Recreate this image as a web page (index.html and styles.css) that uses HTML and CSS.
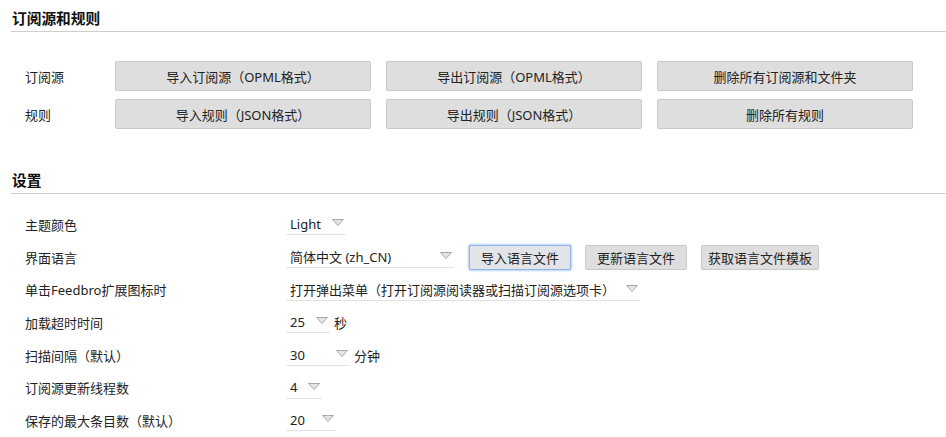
FILE: index.html
```html
<!DOCTYPE html>
<html lang="zh-CN">
<head>
<meta charset="utf-8">
<title>设置</title>
<link rel="stylesheet" href="styles.css">
</head>
<body>
<section class="sec">
  <h2 class="sec-title">订阅源和规则</h2>
  <div class="btn-grid">
    <div class="grid-label">订阅源</div>
    <button class="wide-btn">导入订阅源（OPML格式）</button>
    <button class="wide-btn">导出订阅源（OPML格式）</button>
    <button class="wide-btn">删除所有订阅源和文件夹</button>
    <div class="grid-label">规则</div>
    <button class="wide-btn">导入规则（JSON格式）</button>
    <button class="wide-btn">导出规则（JSON格式）</button>
    <button class="wide-btn">删除所有规则</button>
  </div>
</section>
<section class="sec sec-settings">
  <h2 class="sec-title">设置</h2>
  <div class="rows">
    <div class="row">
      <div class="row-label">主题颜色</div>
      <div class="sel sel-theme"><span>Light</span><svg class="arr" width="12" height="7" viewBox="0 0 12 7"><path d="M0.5 0.5 H11.5 L6 6.5 Z" fill="#e4e4e4" stroke="#a9a9a9" stroke-width="1"/></svg></div>
    </div>
    <div class="row">
      <div class="row-label">界面语言</div>
      <div class="sel sel-lang"><span>简体中文 (zh_CN)</span><svg class="arr" width="12" height="7" viewBox="0 0 12 7"><path d="M0.5 0.5 H11.5 L6 6.5 Z" fill="#e4e4e4" stroke="#a9a9a9" stroke-width="1"/></svg></div>
      <button class="sm-btn focus">导入语言文件</button>
      <button class="sm-btn">更新语言文件</button>
      <button class="sm-btn sm-btn-tight">获取语言文件模板</button>
    </div>
    <div class="row">
      <div class="row-label">单击Feedbro扩展图标时</div>
      <div class="sel sel-popup"><span>打开弹出菜单（打开订阅源阅读器或扫描订阅源选项卡）</span><svg class="arr" width="12" height="7" viewBox="0 0 12 7"><path d="M0.5 0.5 H11.5 L6 6.5 Z" fill="#e4e4e4" stroke="#a9a9a9" stroke-width="1"/></svg></div>
    </div>
    <div class="row">
      <div class="row-label">加载超时时间</div>
      <div class="sel sel-timeout"><span>25</span><svg class="arr" width="12" height="7" viewBox="0 0 12 7"><path d="M0.5 0.5 H11.5 L6 6.5 Z" fill="#e4e4e4" stroke="#a9a9a9" stroke-width="1"/></svg></div>
      <span class="unit">秒</span>
    </div>
    <div class="row">
      <div class="row-label">扫描间隔（默认）</div>
      <div class="sel sel-interval"><span>30</span><svg class="arr" width="12" height="7" viewBox="0 0 12 7"><path d="M0.5 0.5 H11.5 L6 6.5 Z" fill="#e4e4e4" stroke="#a9a9a9" stroke-width="1"/></svg></div>
      <span class="unit">分钟</span>
    </div>
    <div class="row">
      <div class="row-label">订阅源更新线程数</div>
      <div class="sel sel-threads"><span>4</span><svg class="arr" width="12" height="7" viewBox="0 0 12 7"><path d="M0.5 0.5 H11.5 L6 6.5 Z" fill="#e4e4e4" stroke="#a9a9a9" stroke-width="1"/></svg></div>
    </div>
    <div class="row">
      <div class="row-label">保存的最大条目数（默认）</div>
      <div class="sel sel-max"><span>20</span><svg class="arr" width="12" height="7" viewBox="0 0 12 7"><path d="M0.5 0.5 H11.5 L6 6.5 Z" fill="#e4e4e4" stroke="#a9a9a9" stroke-width="1"/></svg></div>
    </div>
  </div>
</section>
</body>
</html>
```
FILE: styles.css
```css
* { box-sizing: border-box; }
html, body { margin: 0; padding: 0; background: #fff; }
body {
  font-family: "Noto Sans", "Noto Sans CJK SC", sans-serif;
  font-size: 13px;
  color: #222;
  padding: 0 0 0 11px;
  overflow: hidden;
}
.sec-title {
  margin: 0;
  font-size: 14.7px;
  font-weight: bold;
  color: #111;
  padding: 8px 0 0 1px;
  height: 32px;
  line-height: 20px;
  border-bottom: 1px solid #cfcfcf;
}
.btn-grid {
  display: grid;
  grid-template-columns: 75px 256px 256px 256px;
  column-gap: 15px;
  row-gap: 8px;
  padding: 29px 0 0 14px;
  align-items: center;
}
.wide-btn {
  height: 30px;
  margin: 0;
  background: #dedede;
  border: 1px solid #c9c9c9;
  border-radius: 2px;
  font: inherit;
  color: #222;
  padding: 0;
}
.sec-settings { margin-top: 33px; }
.rows { padding: 14px 0 0 14px; }
.row {
  display: flex;
  align-items: center;
  height: 32.7px;
}
.row-label { width: 261px; flex: none; }
.sel {
  display: flex;
  align-items: center;
  justify-content: space-between;
  height: 22px;
  padding: 0 2px 0 4px;
  border-bottom: 1px solid #e2e2e2;
}
.sel .arr { flex: none; margin-bottom: 2px; }
.sel-theme { width: 60px; }
.sel-lang { width: 168px; }
.sel-popup { width: 354px; }
.sel-timeout { width: 44px; }
.sel-interval { width: 64px; }
.sel-threads { width: 36px; }
.sel-max { width: 50px; }
.unit { margin-left: 4px; }
.sm-btn {
  height: 25px;
  margin: 0 0 0 14px;
  padding: 0 11px;
  background: #dedede;
  border: 1px solid #c9c9c9;
  border-radius: 2px;
  font: inherit;
  color: #222;
}
.sm-btn-tight { padding: 0 6px; }
.sm-btn.focus {
  margin-left: 15px;
  background: #e2e4e8;
  border-color: #8fb3e6;
  box-shadow: 0 0 2px 1px #b9d0f2;
}
```
